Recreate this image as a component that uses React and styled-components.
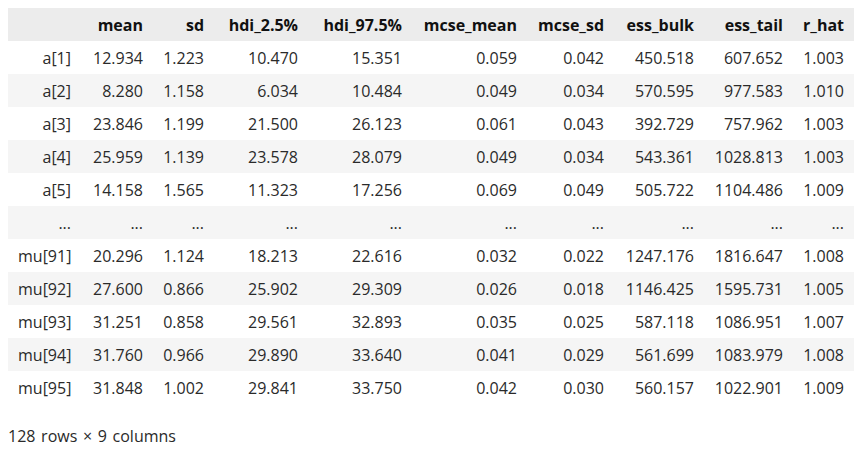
import React from 'react';
import styled, { createGlobalStyle } from 'styled-components';

const GlobalStyle = createGlobalStyle`
  body {
    margin: 8px;
    background: #ffffff;
    font-family: "Open Sans", "Noto Sans", sans-serif;
    color: #2a2a2a;
  }
`;

const Table = styled.table`
  border-collapse: collapse;
  border-spacing: 0;
  table-layout: fixed;
  width: 846px;
  font-size: 16px;
`;

const HeadRow = styled.tr`
  background: #ececec;
`;

const Row = styled.tr`
  background: ${props => (props.striped ? '#f5f5f5' : '#ffffff')};
`;

const HeadCell = styled.th`
  height: 33px;
  padding: 0 10px;
  text-align: right;
  font-weight: 700;
  color: #111;
  white-space: nowrap;
  box-sizing: border-box;
`;

const Cell = styled.td`
  height: 33px;
  padding: 0 10px;
  text-align: right;
  font-weight: 400;
  color: #2a2a2a;
  white-space: nowrap;
  box-sizing: border-box;
`;

const Footer = styled.p`
  margin: 21px 0 0;
  font-size: 16px;
  line-height: 22px;
  word-spacing: 1.5px;
  color: #2a2a2a;
`;

const widths = [73, 72, 61, 94, 104, 115, 87, 90, 89, 61];

const columns = ['mean', 'sd', 'hdi_2.5%', 'hdi_97.5%', 'mcse_mean', 'mcse_sd', 'ess_bulk', 'ess_tail', 'r_hat'];

const rows = [
  ['a[1]', '12.934', '1.223', '10.470', '15.351', '0.059', '0.042', '450.518', '607.652', '1.003'],
  ['a[2]', '8.280', '1.158', '6.034', '10.484', '0.049', '0.034', '570.595', '977.583', '1.010'],
  ['a[3]', '23.846', '1.199', '21.500', '26.123', '0.061', '0.043', '392.729', '757.962', '1.003'],
  ['a[4]', '25.959', '1.139', '23.578', '28.079', '0.049', '0.034', '543.361', '1028.813', '1.003'],
  ['a[5]', '14.158', '1.565', '11.323', '17.256', '0.069', '0.049', '505.722', '1104.486', '1.009'],
  ['...', '...', '...', '...', '...', '...', '...', '...', '...', '...'],
  ['mu[91]', '20.296', '1.124', '18.213', '22.616', '0.032', '0.022', '1247.176', '1816.647', '1.008'],
  ['mu[92]', '27.600', '0.866', '25.902', '29.309', '0.026', '0.018', '1146.425', '1595.731', '1.005'],
  ['mu[93]', '31.251', '0.858', '29.561', '32.893', '0.035', '0.025', '587.118', '1086.951', '1.007'],
  ['mu[94]', '31.760', '0.966', '29.890', '33.640', '0.041', '0.029', '561.699', '1083.979', '1.008'],
  ['mu[95]', '31.848', '1.002', '29.841', '33.750', '0.042', '0.030', '560.157', '1022.901', '1.009'],
];

export default function App() {
  return (
    <>
      <GlobalStyle />
      <Table>
        <colgroup>
          {widths.map((w, i) => (
            <col key={i} style={{ width: w }} />
          ))}
        </colgroup>
        <thead>
          <HeadRow>
            <HeadCell />
            {columns.map(c => (
              <HeadCell key={c}>{c}</HeadCell>
            ))}
          </HeadRow>
        </thead>
        <tbody>
          {rows.map((r, i) => (
            <Row key={i} striped={i % 2 === 1}>
              {r.map((v, j) => (
                <Cell key={j}>{v}</Cell>
              ))}
            </Row>
          ))}
        </tbody>
      </Table>
      <Footer>128 rows × 9 columns</Footer>
    </>
  );
}
